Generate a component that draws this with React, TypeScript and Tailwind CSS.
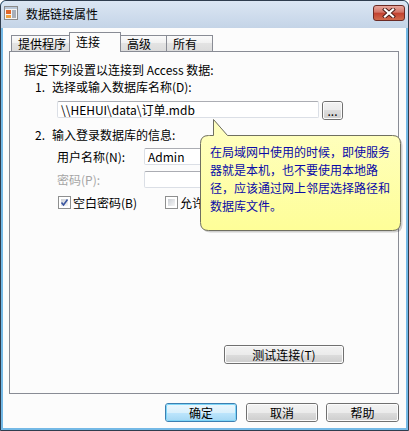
import React from 'react';

const TitleIcon = () => (
  <svg width="16" height="16" viewBox="0 0 16 16">
    <rect x="1.5" y="1.5" width="13" height="13" fill="#f4f4f4" stroke="#8a8a8a" />
    <rect x="2" y="2" width="12" height="2" fill="#b9c7d8" />
    <rect x="3" y="5" width="5" height="4" fill="#e0662a" />
    <rect x="3" y="10" width="5" height="3" fill="#f0a040" />
    <path d="M9 6h4M9 8h4M9 10h4M9 12h4" stroke="#5a6a80" strokeWidth="1" />
  </svg>
);

const CloseButton = () => (
  <div className="w-[32px] h-[16px] rounded-[3px] border border-[#6b2a24] bg-[linear-gradient(#e8a69c,#d27466_45%,#c2402f_50%,#d06a4c)] flex items-center justify-center">
    <svg width="14" height="10" viewBox="0 0 14 10">
      <path d="M3 1.5L11 8.5M11 1.5L3 8.5" stroke="#4a1c16" strokeWidth="4" strokeLinecap="square" />
      <path d="M3 1.5L11 8.5M11 1.5L3 8.5" stroke="#ffffff" strokeWidth="2.2" strokeLinecap="square" />
    </svg>
  </div>
);

const Checkbox = ({ checked }: { checked?: boolean }) => (
  <div className="w-[13px] h-[13px] border border-[#8e8f8f] bg-white p-[2px] shrink-0">
    <div className="w-full h-full bg-[linear-gradient(135deg,#cbcfd5,#f6f6f6)] relative">
      {checked && (
        <svg className="absolute -left-[1px] -top-[1px]" width="9" height="9" viewBox="0 0 9 9">
          <path d="M1.5 4.5L3.5 7L7.5 1.5" fill="none" stroke="#3a55a0" strokeWidth="1.6" />
        </svg>
      )}
    </div>
  </div>
);

const WinButton = ({ label, w, primary }: { label: string; w: string; primary?: boolean }) => (
  <div
    className={`h-[19px] ${w} rounded-[3px] border ${
      primary ? 'border-[#3c7fb1]' : 'border-[#707070]'
    }`}
  >
    <div
      className={`h-full w-full rounded-[2px] border flex items-center justify-center leading-none ${
        primary
          ? 'border-[#7fd6f8] bg-[linear-gradient(#eaf6fd,#d9f0fc_50%,#bee6fd_50%,#a7d9f5)]'
          : 'border-[#fbfbfb] bg-[linear-gradient(#f2f2f2,#ebebeb_50%,#dddddd_50%,#cfcfcf)]'
      }`}
    >
      {label}
    </div>
  </div>
);

const Input = ({ value, w }: { value?: string; w: string }) => (
  <div
    className={`${w} h-[17px] rounded-[2px] border border-[#dbdfe6] border-t-[#abadb3] bg-white pl-[3px] leading-[15px] whitespace-nowrap overflow-hidden`}
  >
    {value}
  </div>
);

const Tab = ({ label, w, active }: { label: string; w: string; active?: boolean }) =>
  active ? (
    <div className={`${w} h-[20px] -mb-px -ml-px relative z-10 border border-b-0 border-[#898c95] bg-[#fcfcfc] pl-[6px] leading-[18px]`}>
      {label}
    </div>
  ) : (
    <div className={`${w} h-[16px] -ml-px border border-b-0 border-[#898c95] bg-[linear-gradient(#fbfbfb,#f0f0f0_50%,#e3e3e3_50%,#dcdcdc)] pl-[6px] leading-[16px]`}>
      {label}
    </div>
  );

const Balloon = () => (
  <div className="absolute left-[198px] top-[117px] w-[206px] h-[118px]">
    <svg className="absolute inset-0" width="206" height="118" viewBox="0 0 206 118">
      <defs>
        <linearGradient id="bl" x1="0" y1="0" x2="0" y2="1">
          <stop offset="0" stopColor="#ffffc2" />
          <stop offset="1" stopColor="#fefe98" />
        </linearGradient>
      </defs>
      <path
        d="M12 19.5H16.5V3.5L30.5 19.5H195.5Q203.5 19.5 203.5 27.5V106.5Q203.5 114.5 195.5 114.5H11.5Q3.5 114.5 3.5 106.5V27.5Q3.5 19.5 11.5 19.5Z"
        fill="#000000"
        opacity="0.18"
      />
      <path
        d="M10.5 17.5H14.5V1.5L28.5 17.5H193.5Q201.5 17.5 201.5 25.5V104.5Q201.5 112.5 193.5 112.5H9.5Q1.5 112.5 1.5 104.5V25.5Q1.5 17.5 9.5 17.5Z"
        fill="url(#bl)"
        stroke="#6f6f60"
        strokeWidth="1"
      />
    </svg>
    <div className="absolute left-[11px] top-[25px] text-[#0a0aa8] leading-[18px] whitespace-nowrap">
      在局域网中使用的时候，即使服务
      <br />
      器就是本机，也不要使用本地路
      <br />
      径，应该通过网上邻居选择路径和
      <br />
      数据库文件。
    </div>
  </div>
);

const App: React.FC = () => {
  return (
    <div className="relative w-[409px] h-[431px] border border-[#2f3d4e] rounded-t-[6px] bg-[#74b9e6] overflow-hidden text-[12px] text-black font-['Noto_Sans_CJK_SC','Noto_Sans',sans-serif] select-none">
      {/* title bar */}
      <div className="h-[27px] flex items-start bg-[linear-gradient(#dbe6f3,#c4d4e7)] rounded-t-[5px]">
        <div className="ml-[2px] mt-[4px]">
          <TitleIcon />
        </div>
        <div className="ml-[7px] mt-[5px] leading-[16px]">数据链接属性</div>
        <div className="ml-auto mr-[3px] mt-[4px]">
          <CloseButton />
        </div>
      </div>

      {/* client */}
      <div className="mx-[2px] h-[400px] bg-[#fcfcfc] pt-[4px] pl-[6px] pr-[7px] flex flex-col">
        <div className="flex items-end h-[19px] pl-[3px]">
          <Tab label="提供程序" w="w-[59px]" />
          <Tab label="连接" w="w-[52px]" active />
          <Tab label="高级" w="w-[47px]" />
          <Tab label="所有" w="w-[47px]" />
        </div>

        <div className="h-[343px] border border-[#898c95] flex flex-col pl-[14px]">
          <div className="mt-[10px] h-[16px] leading-[16px]">指定下列设置以连接到 Access 数据:</div>
          <div className="mt-[1px] h-[16px] leading-[16px] ml-[11px] flex">
            <span className="w-[17px]">1.</span>
            <span>选择或输入数据库名称(D):</span>
          </div>
          <div className="mt-[6px] ml-[33px] flex">
            <Input value="\\HEHUI\data\订单.mdb" w="w-[262px]" />
            <div className="ml-[3px]">
              <WinButton label="..." w="w-[21px]" />
            </div>
          </div>
          <div className="mt-[7px] h-[16px] leading-[16px] ml-[11px] flex">
            <span className="w-[17px]">2.</span>
            <span>输入登录数据库的信息:</span>
          </div>
          <div className="mt-[5px] ml-[33px] flex items-center">
            <div className="w-[87px] leading-[16px]">用户名称(N):</div>
            <Input value="Admin" w="w-[175px]" />
          </div>
          <div className="mt-[6px] ml-[33px] flex items-center">
            <div className="w-[87px] leading-[16px] text-[#a5a5a5]">密码(P):</div>
            <Input w="w-[175px]" />
          </div>
          <div className="mt-[8px] ml-[34px] flex items-center h-[13px]">
            <div className="w-[107px] flex items-center">
              <Checkbox checked />
              <span className="ml-[2px] leading-[16px]">空白密码(B)</span>
            </div>
            <Checkbox />
            <span className="ml-[2px] w-[21px] overflow-hidden whitespace-nowrap leading-[16px]">允许</span>
          </div>
          <div className="mt-auto mb-[29px] ml-[200px]">
            <WinButton label="测试连接(T)" w="w-[120px]" />
          </div>
        </div>

        <div className="mt-[9px] flex justify-end">
          <WinButton label="确定" w="w-[72px]" primary />
          <div className="ml-[9px]">
            <WinButton label="取消" w="w-[72px]" />
          </div>
          <div className="ml-[8px]">
            <WinButton label="帮助" w="w-[73px]" />
          </div>
        </div>
      </div>

      <Balloon />
    </div>
  );
};

export default App;
